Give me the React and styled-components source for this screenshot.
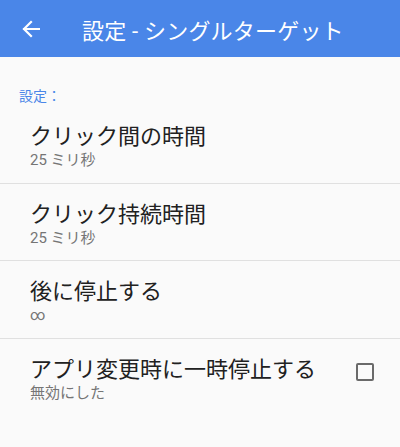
import React from "react";
import styled, { createGlobalStyle } from "styled-components";

const Global = createGlobalStyle`
  html, body { margin: 0; padding: 0; background: #fafafa; }
  body { font-family: Roboto, "Noto Sans CJK JP", sans-serif; }
`;

const Page = styled.div`
  width: 400px;
  height: 447px;
  background: #fafafa;
  display: flex;
  flex-direction: column;
  overflow: hidden;
`;

const Toolbar = styled.header`
  height: 57px;
  background: #4a86e8;
  display: flex;
  align-items: center;
  color: #fff;
  flex-shrink: 0;
`;

const BackButton = styled.div`
  width: 62px;
  padding-left: 22px;
  box-sizing: border-box;
  display: flex;
  align-items: center;
`;

const Title = styled.h1`
  margin: 0 0 0 20px;
  font-size: 22px;
  font-weight: 400;
  letter-spacing: 0.2px;
`;

const Category = styled.div`
  color: #4a86e8;
  font-size: 14px;
  padding: 30px 0 0 19px;
  line-height: 19px;
`;

const List = styled.div`
  display: flex;
  flex-direction: column;
`;

const Item = styled.div`
  display: flex;
  align-items: flex-start;
  padding: 18px 26px 0 30px;
  height: 77.5px;
  box-sizing: border-box;
  border-bottom: ${(p) => (p.last ? "none" : "1.5px solid #e0e0e0")};
`;

const Texts = styled.div`
  flex: 1;
  display: flex;
  flex-direction: column;
`;

const ItemTitle = styled.div`
  font-size: 22px;
  color: #212121;
  line-height: 26px;
`;

const ItemSub = styled.div`
  font-size: 15px;
  color: #757575;
  line-height: 20px;
`;

const Checkbox = styled.div`
  width: 14px;
  height: 14px;
  margin-top: 6px;
  border: 2.5px solid #6a6a6a;
  border-radius: 2px;
`;

export default function App() {
  return (
    <Page>
      <Global />
      <Toolbar>
        <BackButton>
          <svg width="18" height="18" viewBox="0 0 18 18" fill="none" stroke="#fff" strokeWidth="2.2" strokeLinecap="square">
            <path d="M2 9h15M9 2L2 9l7 7" />
          </svg>
        </BackButton>
        <Title>設定 - シングルターゲット</Title>
      </Toolbar>
      <Category>設定：</Category>
      <List>
        <Item>
          <Texts>
            <ItemTitle>クリック間の時間</ItemTitle>
            <ItemSub>25 ミリ秒</ItemSub>
          </Texts>
        </Item>
        <Item>
          <Texts>
            <ItemTitle>クリック持続時間</ItemTitle>
            <ItemSub>25 ミリ秒</ItemSub>
          </Texts>
        </Item>
        <Item>
          <Texts>
            <ItemTitle>後に停止する</ItemTitle>
            <ItemSub>∞</ItemSub>
          </Texts>
        </Item>
        <Item last>
          <Texts>
            <ItemTitle>アプリ変更時に一時停止する</ItemTitle>
            <ItemSub>無効にした</ItemSub>
          </Texts>
          <Checkbox />
        </Item>
      </List>
    </Page>
  );
}
